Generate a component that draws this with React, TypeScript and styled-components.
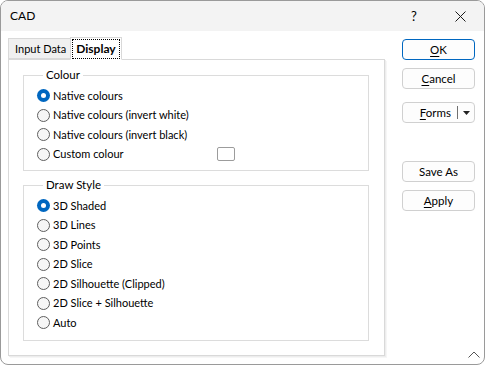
import React from "react";
import styled, { createGlobalStyle, css } from "styled-components";

const Global = createGlobalStyle`
  html, body { margin: 0; padding: 0; background: #ffffff; }
  body { font-family: Lato, "Liberation Sans", sans-serif; font-size: 11px; color: #000; }
  * { box-sizing: border-box; }
`;

const Window = styled.div`
  width: 485px;
  height: 365px;
  border: 1px solid #9a9a9a;
  border-radius: 8px;
  overflow: hidden;
  background: #ffffff;
  display: flex;
  flex-direction: column;
  position: relative;
`;

const TitleBar = styled.div`
  height: 30px;
  flex: none;
  background: #f3f3f3;
  display: flex;
  align-items: center;
  padding-left: 9px;
`;

const Title = styled.div`
  flex: 1;
  font-size: 12px;
  line-height: 16px;
`;

const TitleButton = styled.div<{ $w: number }>`
  width: ${(p) => p.$w}px;
  height: 30px;
  display: flex;
  align-items: center;
  justify-content: center;
  font-size: 13px;
`;

const Body = styled.div`
  flex: 1;
  display: flex;
  padding: 6px 0 0 7px;
`;

const LeftCol = styled.div`
  width: 377px;
  display: flex;
  flex-direction: column;
`;

const TabRow = styled.div`
  height: 22px;
  display: flex;
  align-items: flex-end;
  position: relative;
  z-index: 1;
`;

const Tab = styled.div<{ $active?: boolean }>`
  border: 1px solid #d9d9d9;
  ${(p) =>
    p.$active
      ? css`
          height: 23px;
          margin-bottom: -1px;
          background: #ffffff;
          border-bottom-color: #ffffff;
          font-weight: 700;
          font-size: 12px;
          padding: 1px 1px 0 1px;
        `
      : css`
          height: 21px;
          background: #f0f0f0;
          border-right: none;
          padding: 0 4px 0 6px;
          line-height: 19px;
          font-size: 11px;
        `}
`;

const FocusLabel = styled.div`
  border: 1px dotted #000;
  padding: 0 3px;
  line-height: 18px;
`;

const Panel = styled.div`
  height: 297px;
  border: 1px solid #d9d9d9;
  box-shadow: 1px 1px 0 #ededed, 2px 2px 0 #f6f6f6;
  padding: 7px 15px 0 14px;
  display: flex;
  flex-direction: column;
  gap: 6px;
`;

const Group = styled.fieldset<{ $bottom: number; $top: number }>`
  margin: 0;
  border: 1px solid #dcdcdc;
  padding: ${(p) => p.$top}px 0 ${(p) => p.$bottom}px 13px;
  min-width: 0;
`;

const Legend = styled.legend`
  margin-left: 6px;
  padding: 0 3px;
  line-height: 16px;
  font-size: 11.5px;
`;

const RadioRow = styled.div`
  height: 19.5px;
  display: flex;
  align-items: center;
`;

const Radio = styled.span<{ $on?: boolean }>`
  width: 13px;
  height: 13px;
  border-radius: 50%;
  flex: none;
  margin-right: 3px;
  ${(p) =>
    p.$on
      ? css`
          background: #0067c0;
          display: flex;
          align-items: center;
          justify-content: center;
          &::after {
            content: "";
            width: 5px;
            height: 5px;
            border-radius: 50%;
            background: #fff;
          }
        `
      : css`
          border: 1px solid #5f5f5f;
          background: #f6f6f6;
        `}
`;

const Label = styled.span<{ $w?: number }>`
  line-height: 16px;
  white-space: nowrap;
  ${(p) => (p.$w ? `width: ${p.$w}px;` : "")}
`;

const Swatch = styled.span`
  width: 18px;
  height: 14px;
  border: 1px solid #9c9c9c;
  border-radius: 2px;
  background: #fff;
`;

const RightCol = styled.div`
  margin-left: 17px;
  padding-top: 2px;
  width: 73px;
  display: flex;
  flex-direction: column;
`;

const Button = styled.div<{ $primary?: boolean; $gap: number }>`
  height: 21px;
  margin-top: ${(p) => p.$gap}px;
  border: 1px solid ${(p) => (p.$primary ? "#0067c0" : "#d0d0d0")};
  border-radius: 4px;
  background: #fdfdfd;
  display: flex;
  align-items: center;
  justify-content: center;
  line-height: 16px;
  font-size: 11.5px;
`;

const SplitButton = styled(Button)`
  justify-content: flex-end;
  padding-right: 4px;
`;

const Sep = styled.span`
  width: 1px;
  height: 13px;
  background: #707070;
  margin: 0 5px 0 6px;
`;

const U = styled.span`
  text-decoration: underline;
  text-underline-offset: 2px;
`;

const Grip = styled.svg`
  position: absolute;
  right: 4px;
  bottom: 6px;
`;

const colours = [
  "Native colours",
  "Native colours (invert white)",
  "Native colours (invert black)",
];
const styles = [
  "3D Shaded",
  "3D Lines",
  "3D Points",
  "2D Slice",
  "2D Silhouette (Clipped)",
  "2D Slice + Silhouette",
  "Auto",
];

export default function App() {
  return (
    <>
      <Global />
      <Window>
        <TitleBar>
          <Title>CAD</Title>
          <TitleButton $w={46}>?</TitleButton>
          <TitleButton $w={47}>
            <svg width="11" height="11" viewBox="0 0 11 11">
              <path d="M0.5 0.5 L10.5 10.5 M10.5 0.5 L0.5 10.5" stroke="#1a1a1a" strokeWidth="1" />
            </svg>
          </TitleButton>
        </TitleBar>
        <Body>
          <LeftCol>
            <TabRow>
              <Tab>Input Data</Tab>
              <Tab $active>
                <FocusLabel>Display</FocusLabel>
              </Tab>
            </TabRow>
            <Panel>
              <Group $top={3} $bottom={6}>
                <Legend>Colour</Legend>
                {colours.map((c, i) => (
                  <RadioRow key={c}>
                    <Radio $on={i === 0} />
                    <Label>{c}</Label>
                  </RadioRow>
                ))}
                <RadioRow>
                  <Radio />
                  <Label $w={164}>Custom colour</Label>
                  <Swatch />
                </RadioRow>
              </Group>
              <Group $top={3} $bottom={7}>
                <Legend>Draw Style</Legend>
                {styles.map((s, i) => (
                  <RadioRow key={s}>
                    <Radio $on={i === 0} />
                    <Label>{s}</Label>
                  </RadioRow>
                ))}
              </Group>
            </Panel>
          </LeftCol>
          <RightCol>
            <Button $primary $gap={0}>
              <span><U>O</U>K</span>
            </Button>
            <Button $gap={8}>
              <span><U>C</U>ancel</span>
            </Button>
            <SplitButton $gap={13}>
              <span><U>F</U>orms</span>
              <Sep />
              <svg width="7" height="4" viewBox="0 0 7 4">
                <path d="M0 0 H7 L3.5 4 Z" fill="#222" />
              </svg>
            </SplitButton>
            <Button $gap={38}>Save As</Button>
            <Button $gap={8}>
              <span><U>A</U>pply</span>
            </Button>
          </RightCol>
        </Body>
        <Grip width="12" height="7" viewBox="0 0 12 7">
          <path d="M0.5 6.5 L6 1 L11.5 6.5" stroke="#555" strokeWidth="1" fill="none" />
        </Grip>
      </Window>
    </>
  );
}
